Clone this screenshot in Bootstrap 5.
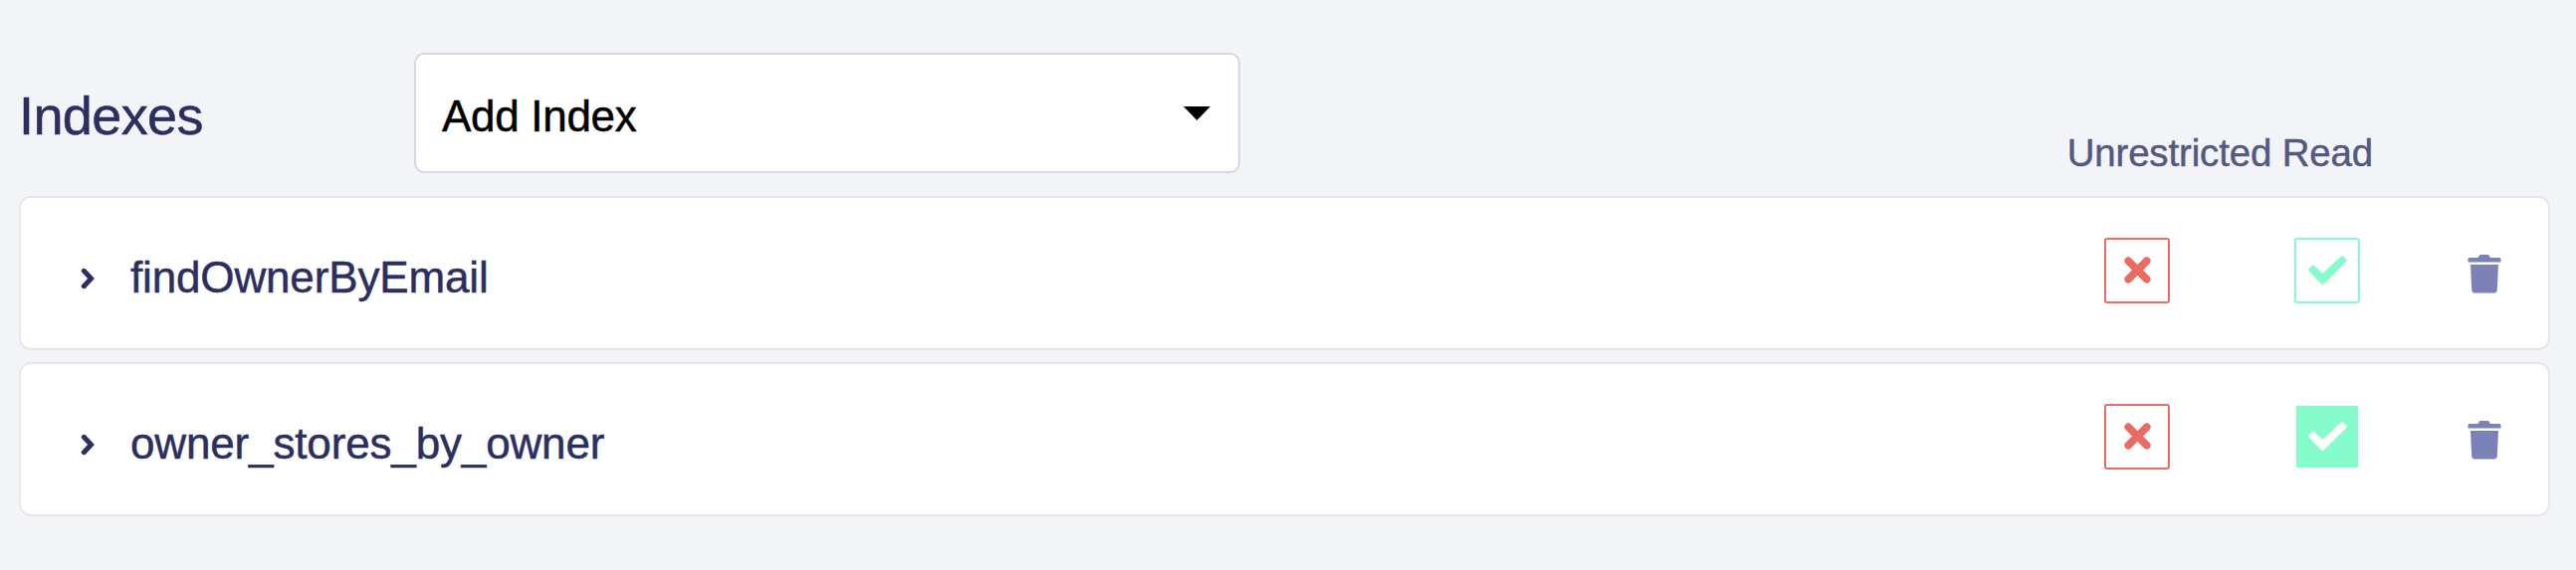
<!DOCTYPE html>
<html lang="en">
<head>
<meta charset="utf-8">
<meta name="viewport" content="width=device-width, initial-scale=1">
<title>Indexes</title>
<link rel="stylesheet" href="https://cdn.jsdelivr.net/npm/bootstrap@5.3.0/dist/css/bootstrap.min.css">
<style>
body{background:#f3f4f8;color:#2b2f5f;font-family:"Liberation Sans",Arial,sans-serif;font-size:44px;line-height:1.2;overflow:hidden;-webkit-text-stroke:.5px currentColor}
.page{padding:53px 26px 0 19px}
.head{height:121px;margin-bottom:23px}
.title{width:397px;font-size:54px;line-height:64px;margin-top:31px;font-weight:400;letter-spacing:-.6px}
.picker{width:830px;height:121px;border:2px solid #d6d5ea;border-radius:10px;background:#fff;color:#000;font-size:44px;padding:8px 28px 0 26px;letter-spacing:-.3px}
.picker svg{margin-top:-8px}
.perm{font-size:38.4px;line-height:46px;color:#535a80;margin-right:178px;margin-bottom:-3px;letter-spacing:-.12px}
.entry{height:155px;border:2px solid #e6e7ed;border-radius:12px;background:#fff;margin-bottom:12px;padding:0 47px 0 60px}
.entry .chev{margin-top:10px}
.entry .label{margin-left:35px;padding-top:10px;letter-spacing:-.15px}
.box{width:66px;height:66px;border:2px solid;border-radius:3px;margin-top:-6px}
.deny{color:#eb6a62;margin-right:125px}
.allow{color:#86fbcb;margin-right:108px}
.allow.on{background:#86fbcb;background-clip:padding-box;border-color:transparent;border-radius:0;color:#fff}
.trash{color:#7d82b6;margin-top:1px}
</style>
</head>
<body>
<main class="page">
  <header class="head d-flex align-items-start">
    <h1 class="title mb-0 text-nowrap">Indexes</h1>
    <button type="button" class="picker d-flex align-items-center justify-content-between text-start">
      <span>Add Index</span>
      <svg width="27" height="14" viewBox="0 0 27 14" fill="currentColor"><path d="M0 0h27L13.500 14z"/></svg>
    </button>
    <div class="perm ms-auto align-self-end text-nowrap">Unrestricted Read</div>
  </header>

  <section class="entry d-flex align-items-center">
    <svg class="chev flex-shrink-0" width="15" height="22" viewBox="0 0 15 22" fill="none" stroke="currentColor" stroke-width="5" stroke-linecap="round" stroke-linejoin="miter"><path d="M3.300 3.300 10.500 11 3.300 18.700"/></svg>
    <div class="label flex-grow-1">findOwnerByEmail</div>
    <div class="box deny d-flex align-items-center justify-content-center">
      <svg width="27" height="27" viewBox="0 0 27 27" stroke="currentColor" stroke-width="7.600" stroke-linecap="round"><path d="M4.200 4.200 22.800 22.800M22.800 4.200 4.200 22.800"/></svg>
    </div>
    <div class="box allow d-flex align-items-center justify-content-center">
      <svg width="39" height="30" viewBox="0 0 39 30" fill="currentColor" stroke="currentColor" stroke-width="3" stroke-linejoin="round"><path d="M1.700 14.300 5 11.200 14.400 20 34.200 1.700 37.300 5 14.400 27.600z"/></svg>
    </div>
    <svg class="trash flex-shrink-0" width="34" height="39" viewBox="0 0 34 39" fill="currentColor"><path d="M12.500 0h8.500l2 3h9q1.500 0 1.500 1.500V7.500H.500V4.500Q.500 3 2 3h8.500zM3 10h28l-1.200 25.500q-.2 3-3 3H7.200q-2.800 0-3-3z"/></svg>
  </section>

  <section class="entry d-flex align-items-center">
    <svg class="chev flex-shrink-0" width="15" height="22" viewBox="0 0 15 22" fill="none" stroke="currentColor" stroke-width="5" stroke-linecap="round" stroke-linejoin="miter"><path d="M3.300 3.300 10.500 11 3.300 18.700"/></svg>
    <div class="label flex-grow-1">owner_stores_by_owner</div>
    <div class="box deny d-flex align-items-center justify-content-center">
      <svg width="27" height="27" viewBox="0 0 27 27" stroke="currentColor" stroke-width="7.600" stroke-linecap="round"><path d="M4.200 4.200 22.800 22.800M22.800 4.200 4.200 22.800"/></svg>
    </div>
    <div class="box allow on d-flex align-items-center justify-content-center">
      <svg width="39" height="30" viewBox="0 0 39 30" fill="currentColor" stroke="currentColor" stroke-width="3" stroke-linejoin="round"><path d="M1.700 14.300 5 11.200 14.400 20 34.200 1.700 37.300 5 14.400 27.600z"/></svg>
    </div>
    <svg class="trash flex-shrink-0" width="34" height="39" viewBox="0 0 34 39" fill="currentColor"><path d="M12.500 0h8.500l2 3h9q1.500 0 1.500 1.500V7.500H.500V4.500Q.500 3 2 3h8.500zM3 10h28l-1.200 25.500q-.2 3-3 3H7.200q-2.800 0-3-3z"/></svg>
  </section>
</main>
<script src="https://cdn.jsdelivr.net/npm/bootstrap@5.3.0/dist/js/bootstrap.bundle.min.js"></script>
</body>
</html>
